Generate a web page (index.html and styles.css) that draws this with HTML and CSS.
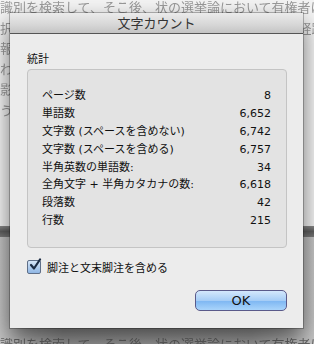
FILE: index.html
```html
<!DOCTYPE html>
<html>
<head>
    <title>文字カウント</title>
    <link rel="stylesheet" href="styles.css">
</head>
<body>
    <div class="backdrop">
        <div class="doc">
            <p>識別を検索して、そこ後、状の選挙論において有権者はとう</p>
            <p>択する場合の判断材料として各党の公約を比較する経路を</p>
            <p>報道の中で示された内容を整理して記述するそ</p>
            <p>わかりやすい形でまとめることで理解が深まる</p>
            <p>影響を受けた有権者の行動を分析する部分よ</p>
            <p>うな結果を示す調査の内容について知る</p>
        </div>
        <div class="band"></div>
        <div class="under">
            <p>識別を検索して、そこ後、状の選挙論において有権者はとう</p>
        </div>
    </div>

    <div class="dialog">
        <div class="titlebar">文字カウント</div>
        <div class="body">
            <div class="group-label">統計</div>
            <div class="group">
                <div class="row"><span>ページ数</span><span class="num">8</span></div>
                <div class="row"><span>単語数</span><span class="num">6,652</span></div>
                <div class="row"><span>文字数 (スペースを含めない)</span><span class="num">6,742</span></div>
                <div class="row"><span>文字数 (スペースを含める)</span><span class="num">6,757</span></div>
                <div class="row"><span>半角英数の単語数:</span><span class="num">34</span></div>
                <div class="row"><span>全角文字 + 半角カタカナの数:</span><span class="num">6,618</span></div>
                <div class="row"><span>段落数</span><span class="num">42</span></div>
                <div class="row"><span>行数</span><span class="num">215</span></div>
            </div>
            <label class="check">
                <span class="box">
                    <svg width="14" height="14" viewBox="0 0 14 14">
                        <path d="M3 7 L6 10.5 L12 1.5" fill="none" stroke="#1c2c44" stroke-width="2.2" stroke-linecap="round" stroke-linejoin="round"/>
                    </svg>
                </span>
                脚注と文末脚注を含める
            </label>
            <div class="actions">
                <button class="ok">OK</button>
            </div>
        </div>
    </div>
</body>
</html>
```

FILE: styles.css
```css
html, body {
    margin: 0;
    padding: 0;
}
body {
    width: 314px;
    height: 344px;
    overflow: hidden;
    position: relative;
    font-family: "DejaVu Sans", "Noto Sans CJK JP", sans-serif;
}
.backdrop {
    display: flex;
    flex-direction: column;
    height: 344px;
    overflow: hidden;
}
.doc {
    height: 226px;
    background: #f4f4f4;
    overflow: hidden;
}
.doc p, .under p {
    margin: 0;
    height: 20.5px;
    line-height: 13px;
    font-size: 13px;
    color: #9a9a9a;
    white-space: nowrap;
    overflow: hidden;
    font-family: "Noto Sans CJK JP", serif;
    filter: blur(0.4px);
}
.band {
    height: 11px;
    background: linear-gradient(#8a8a8a, #5e5e5e 50%, #7a7a7a);
}
.under {
    flex: 1;
    background: linear-gradient(90deg, #c4c4c4, #9a9a9a 20%, #a0a0a0 80%, #c6c6c6);
    display: flex;
    flex-direction: column;
    justify-content: flex-end;
    overflow: hidden;
}
.under p {
    height: 8px;
    line-height: 16px;
    color: #666;
}
.dialog {
    position: absolute;
    left: 10px;
    top: 13px;
    width: 293px;
    height: 315px;
    background: #ececec;
    box-shadow: 0 10px 22px rgba(0, 0, 0, 0.55), 0 0 0 1px rgba(0, 0, 0, 0.25);
    display: flex;
    flex-direction: column;
}
.titlebar {
    height: 20px;
    line-height: 20px;
    text-align: center;
    font-family: "Noto Sans CJK JP", sans-serif;
    font-size: 13px;
    color: #333;
    background: linear-gradient(#ebebeb, #d6d6d6 60%, #c4c4c4);
    border-bottom: 1px solid #555;
}
.body {
    flex: 1;
    padding: 17px 16px 0 16px;
    display: flex;
    flex-direction: column;
    font-size: 11px;
    color: #111;
}
.group-label {
    font-family: "Noto Sans CJK JP", sans-serif;
    height: 15px;
    line-height: 15px;
    padding-left: 1px;
}
.group {
    margin-top: 3px;
    margin-left: 1px;
    height: 160px;
    border: 1px solid #c4c4c4;
    border-radius: 4px;
    background: #e3e3e3;
    padding: 17px 15px 0 14px;
    display: flex;
    flex-direction: column;
}
.row {
    height: 17.9px;
    line-height: 17.9px;
    display: flex;
    justify-content: space-between;
}
.check {
    margin-top: 11px;
    margin-left: 1px;
    display: flex;
    align-items: center;
    gap: 6px;
    height: 16px;
    font-family: "Noto Sans CJK JP", sans-serif;
}
.box {
    width: 12px;
    height: 12px;
    border: 1px solid #5f6f88;
    border-radius: 2px;
    background: linear-gradient(#d6e6f8, #8fb6e4);
    position: relative;
}
.box svg {
    position: absolute;
    left: 0;
    top: -3px;
}
.actions {
    margin-top: 15px;
    display: flex;
    justify-content: flex-end;
}
.ok {
    width: 92px;
    height: 21px;
    border: 1px solid #5a5a8a;
    border-radius: 5px;
    background: linear-gradient(#d4e8fc, #a6cdf6 50%, #7db6f2 51%, #a9d4fb);
    font-family: "DejaVu Sans", sans-serif;
    font-size: 13px;
    color: #111;
    padding: 0;
}
```
